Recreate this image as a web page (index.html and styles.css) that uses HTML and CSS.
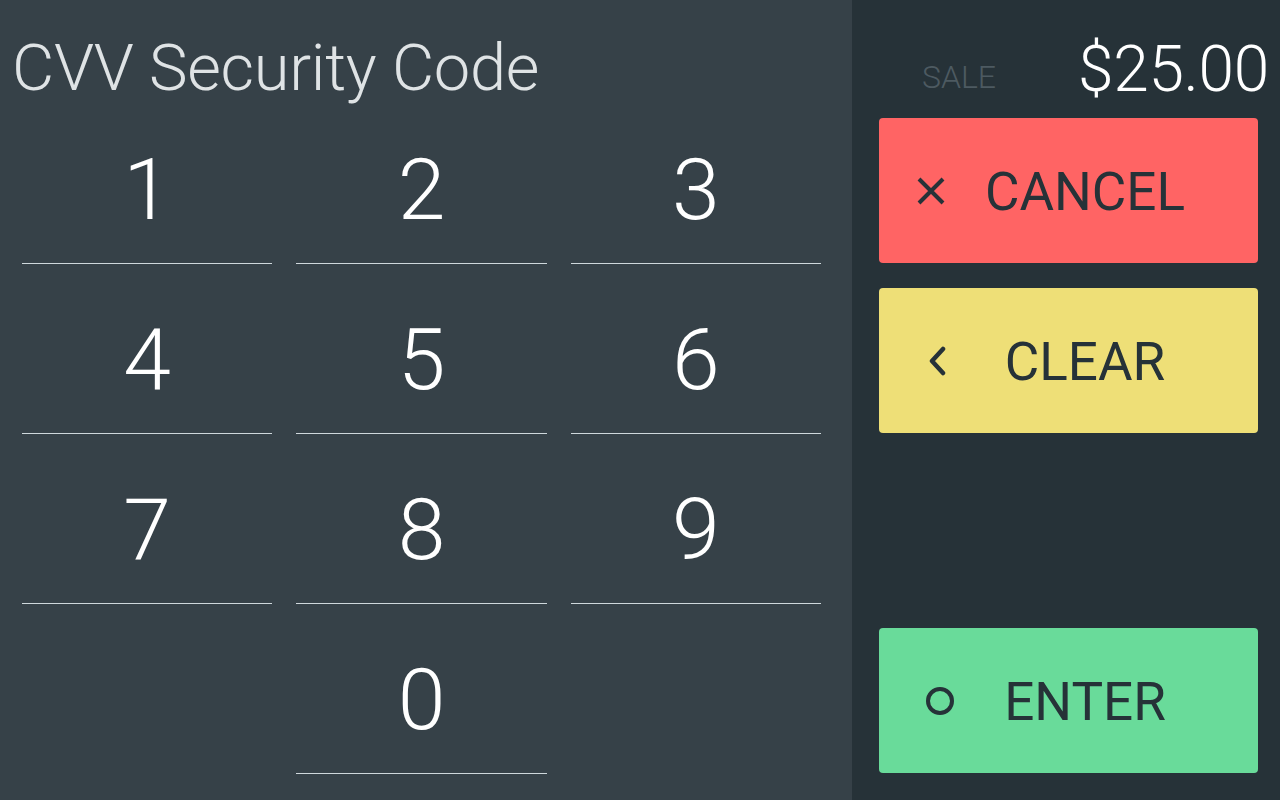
FILE: index.html
```html
<!DOCTYPE html>
<html>
<head>
<meta charset="utf-8">
<link rel="stylesheet" href="styles.css">
</head>
<body>
<div class="screen">
  <section class="entry">
    <h1 class="title">CVV Security Code</h1>
    <div class="keypad">
      <div class="key">1</div>
      <div class="key">2</div>
      <div class="key">3</div>
      <div class="key">4</div>
      <div class="key">5</div>
      <div class="key">6</div>
      <div class="key">7</div>
      <div class="key">8</div>
      <div class="key">9</div>
      <div class="key key-blank"></div>
      <div class="key">0</div>
      <div class="key key-blank"></div>
    </div>
  </section>
  <aside class="side">
    <div class="summary">
      <span class="sale">SALE</span>
      <span class="amount">$25.00</span>
    </div>
    <button class="action action-cancel">
      <span class="icon"><svg width="30" height="28" viewBox="0 0 30 28" class="icon-x"><path d="M3 2 L27 26 M27 2 L3 26" stroke="#263238" stroke-width="4" fill="none"/></svg></span>
      <span class="label">CANCEL</span>
    </button>
    <button class="action action-clear">
      <span class="icon"><svg width="20" height="30" viewBox="0 0 20 30" class="icon-back"><path d="M16 3 L5 15 L16 27" stroke="#263238" stroke-width="4.5" fill="none" stroke-linecap="round" stroke-linejoin="round"/></svg></span>
      <span class="label">CLEAR</span>
    </button>
    <div class="spacer"></div>
    <button class="action action-enter">
      <span class="icon"><svg width="30" height="30" viewBox="0 0 30 30" class="icon-ok"><circle cx="15" cy="15" r="12" stroke="#263238" stroke-width="4" fill="none"/></svg></span>
      <span class="label">ENTER</span>
    </button>
  </aside>
</div>
</body>
</html>
```
FILE: styles.css
```css
* { box-sizing: border-box; }
html, body { margin: 0; padding: 0; }
body {
  width: 1280px;
  height: 800px;
  overflow: hidden;
  font-family: Roboto, "Liberation Sans", sans-serif;
  background: #263238;
}
.screen {
  display: flex;
  width: 1280px;
  height: 800px;
}
.entry {
  width: 852px;
  background: #364148;
  padding: 0 31px 0 22px;
}
.title {
  margin: 0 0 0 -10px;
  padding-top: 36px;
  height: 94px;
  font-weight: 300;
  font-size: 65px;
  letter-spacing: -0.3px;
  line-height: 1;
  color: #dfe3e5;
  white-space: nowrap;
}
.keypad {
  display: grid;
  grid-template-columns: repeat(3, 1fr);
  column-gap: 24px;
}
.key {
  height: 170px;
  border-bottom: 1px solid #cfd8dc;
  color: #ffffff;
  font-weight: 300;
  font-size: 86px;
  line-height: 1;
  text-align: center;
  padding-top: 53px;
}
.key-blank { border-bottom-color: transparent; }
.side {
  flex: 1;
  display: flex;
  flex-direction: column;
  padding: 0 22px 27px 27px;
}
.summary {
  height: 118px;
  display: flex;
  justify-content: flex-end;
  align-items: flex-start;
  margin-right: -11px;
  gap: 82px;
}
.sale {
  margin-top: 61px;
  font-weight: 300;
  font-size: 32px;
  line-height: 1;
  color: #4d5a61;
}
.amount {
  margin-top: 38px;
  font-weight: 300;
  font-size: 64px;
  letter-spacing: -0.3px;
  line-height: 1;
  color: #ffffff;
}
.action {
  display: flex;
  align-items: center;
  height: 145px;
  border: none;
  border-radius: 4px;
  padding: 3px 55px 0 24px;
  font-family: Roboto, "Liberation Sans", sans-serif;
  color: #263238;
  cursor: pointer;
}
.action + .action { margin-top: 25px; }
.action-cancel { background: #ff6464; }
.action-clear { background: #eedf77; }
.action-enter { background: #69db9a; }
.icon {
  width: 64px;
  display: flex;
  justify-content: center;
  align-items: center;
  margin-top: -3px;
}
.icon-x { margin-left: -8px; }
.icon-back { margin-left: 4px; }
.icon-ok { margin-left: 10px; }
.label {
  flex: 1;
  text-align: center;
  font-size: 53px;
  font-weight: 400;
  line-height: 1;
}
.spacer { flex: 1; }
```
